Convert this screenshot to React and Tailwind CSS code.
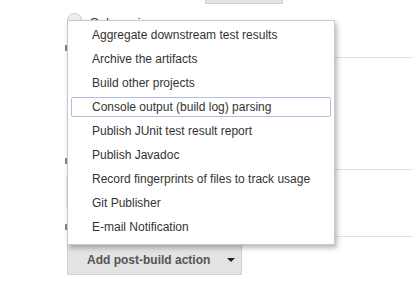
import React from "react";

const items = [
  "Aggregate downstream test results",
  "Archive the artifacts",
  "Build other projects",
  "Console output (build log) parsing",
  "Publish JUnit test result report",
  "Publish Javadoc",
  "Record fingerprints of files to track usage",
  "Git Publisher",
  "E-mail Notification",
];

export default function App() {
  return (
    <div
      className="relative w-[413px] h-[290px] overflow-hidden bg-white text-[12px] text-[#333]"
      style={{ fontFamily: '"Liberation Sans", Arial, sans-serif' }}
    >
      {/* page behind */}
      <div className="flex flex-col">
        <div className="ml-[205px] w-[78px] h-[4px] bg-[#e4e4e4] border-b border-x border-[#cfcfcf]" />
        <div className="flex items-start gap-[8px] ml-[67px] mt-[9px] h-[14px]">
          <div className="w-[15px] h-[15px] rounded-full border border-[#c8c8c8] bg-[#f0f0f0]" />
          <span className="mt-[2px] text-[13px] leading-[15px]">Subversion</span>
        </div>
        <div className="flex mt-[18px] h-[6px]">
          <div className="ml-[65px] w-[2px] h-[6px] bg-[#888]" />
        </div>
        <div className="ml-[67px] mt-[6px] h-px bg-[#e2e2e2]" />
        <div className="flex mt-[100px] h-[6px]">
          <div className="ml-[65px] w-[2px] h-[6px] bg-[#888]" />
        </div>
        <div className="ml-[67px] mt-[5px] h-px bg-[#e2e2e2]" />
        <div className="ml-[66px] mt-[7px] w-px h-[30px] bg-[#e6e6e6]" />
        <div className="flex mt-[17px] h-[6px]">
          <div className="ml-[65px] w-[2px] h-[6px] bg-[#888]" />
        </div>
        <div className="ml-[67px] mt-[6px] h-px bg-[#e2e2e2]" />
        <div className="ml-[67px] mt-[7px] w-[175px] h-[31px] bg-[#e3e3e3] border border-[#d2d2d2] flex items-center whitespace-nowrap">
          <span className="ml-[19px] font-bold text-[12px] text-[#555]">Add post-build action</span>
          <svg className="ml-[17px]" width="8" height="4" viewBox="0 0 8 4">
            <path d="M0 0 L8 0 L4 4 Z" fill="#222" />
          </svg>
        </div>
      </div>

      {/* dropdown menu overlay */}
      <div className="absolute left-[67px] top-[20px] w-[268px] h-[225px] bg-white border border-[#c9c9c9] shadow-[2px_3px_5px_rgba(0,0,0,0.28)] pt-[2px]">
        {items.map((t, i) => (
          <div key={t} className="h-[24px] px-[3px] py-[2px]">
            <div
              className={
                "h-[20px] flex items-center pl-[20px] rounded-[2px] whitespace-nowrap " +
                (i === 3 ? "border border-[#aebfe0]" : "border border-transparent")
              }
            >
              {t}
            </div>
          </div>
        ))}
      </div>
    </div>
  );
}
